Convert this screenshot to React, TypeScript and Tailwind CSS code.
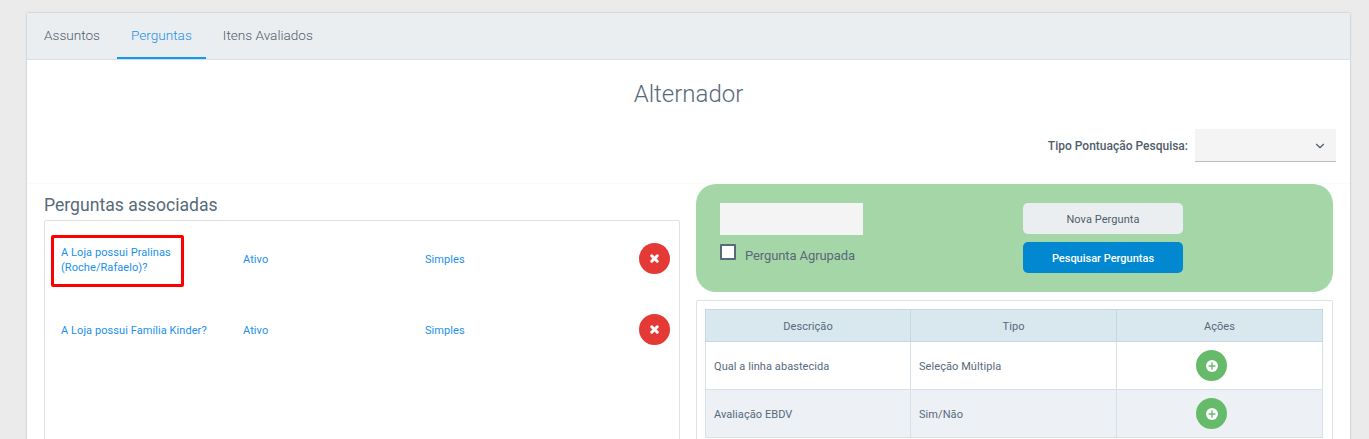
import { ChevronDown, Plus, X } from "lucide-react";

const associadas = [
  { descricao: "A Loja possui Pralinas (Roche/Rafaelo)?", marcada: true },
  { descricao: "A Loja possui Família Kinder?", marcada: false },
];

const perguntas = [
  { descricao: "Qual a linha abastecida", tipo: "Seleção Múltipla", bg: "bg-white" },
  { descricao: "Avaliação EBDV", tipo: "Sim/Não", bg: "bg-[#edf0f5]" },
];

export default function App() {
  return (
    <div className="h-[439px] overflow-hidden bg-[#ebebeb] pl-[27px] pt-[13px] font-['Roboto',sans-serif] text-[#57697a]">
      <div className="h-[500px] w-[1323px] bg-white shadow-[0_0_2px_rgba(0,0,0,0.25)]">
        <nav className="flex h-[47px] gap-[3px] border-b border-[#dcdfe2] bg-[#ebeef1] pl-[3px] text-[13.6px] font-light">
          <a className="flex h-[46px] items-center px-[14px] pb-[2px] text-[#4f5d6b]">Assuntos</a>
          <a className="flex h-[46px] items-center border-b-2 border-[#0d9bf2] px-[14px] text-[#2090ea]">Perguntas</a>
          <a className="flex h-[46px] items-center px-[14px] pb-[2px] text-[#4f5d6b]">Itens Avaliados</a>
        </nav>

        <h1 className="mt-[17px] text-center text-[24px] font-light leading-[34px] text-[#57697a]">Alternador</h1>

        <div className="mt-[18px] flex items-center justify-end pr-[14px]">
          <span className="mr-[7px] text-[12px] font-medium text-[#4f5d6b]">Tipo Pontuação Pesquisa:</span>
          <div className="flex h-[33px] w-[141px] items-center justify-end border-b border-[#b8bec4] bg-[#f4f4f4] pr-[9px]">
            <ChevronDown size={14} strokeWidth={2} className="mt-[1px] text-[#4f5d6b]" />
          </div>
        </div>

        <div className="mt-[21px] flex gap-[16px] border-t border-[#fafafa] pl-[17px]">
          <section className="w-[636px]">
            <h2 className="mt-[9px] text-[17.6px] leading-[24px] text-[#57697a]">Perguntas associadas</h2>
            <div className="mt-[3px] h-[300px] rounded-[2px] border border-[#dfe1e3] pl-[6px] pt-[3px]">
              {associadas.map((item) => (
                <div key={item.descricao} className="flex h-[71px] items-center text-[11px] leading-[15px] tracking-[0.07px] text-[#2090ea]">
                  <div className="relative flex h-[52px] w-[133px] items-center pl-[10px] pr-[6px]">
                    <span className={item.marcada ? "" : "whitespace-nowrap"}>{item.descricao}</span>
                    {item.marcada && (
                      <span className="absolute left-0 top-[1px] h-[52px] w-[133px] rounded-[2px] border-[3px] border-[#ff0000]" />
                    )}
                  </div>
                  <span className="ml-[59px] w-[182px]">Ativo</span>
                  <span className="w-[214px]">Simples</span>
                  <button className="mb-[2px] flex h-[31px] w-[31px] items-center justify-center rounded-full bg-[#e53935] text-white">
                    <X size={11} strokeWidth={6.5} />
                  </button>
                </div>
              ))}
            </div>
          </section>

          <section className="w-[637px]">
            <div className="flex h-[108px] rounded-[20px] bg-[#a5d6a7] pl-[24px] pt-[19px]">
              <div className="w-[303px]">
                <div className="h-[32px] w-[143px] bg-[#f4f4f4]" />
                <label className="mt-[9px] flex items-start text-[13px] tracking-[-0.1px] text-[#57697a]">
                  <span className="h-[16px] w-[16px] rounded-[1px] border-2 border-[#57697a] bg-white" />
                  <span className="ml-[9px] mt-[2px]">Pergunta Agrupada</span>
                </label>
              </div>
              <div className="flex w-[160px] flex-col gap-[8px]">
                <button className="h-[31px] rounded-[5px] bg-[#ebeef1] pt-[3px] text-[11px] tracking-[0.07px] text-[#4f5d6b]">Nova Pergunta</button>
                <button className="h-[31px] rounded-[5px] bg-[#0288d1] pt-[3px] text-[11px] font-medium text-white">Pesquisar Perguntas</button>
              </div>
            </div>

            <div className="mt-[8px] h-[200px] rounded-[2px] border border-[#dfe1e3] pl-[8px] pr-[9px] pt-[8px]">
              <table className="w-[618px] table-fixed border-collapse text-[11px] tracking-[0.07px]">
                <colgroup>
                  <col className="w-[205px]" />
                  <col className="w-[206px]" />
                  <col className="w-[206px]" />
                </colgroup>
                <thead>
                  <tr className="h-[32px] bg-[#d9e7ef] text-[#57697a]">
                    <th className="border border-[#c5d8e2] pt-[3px] font-normal">Descrição</th>
                    <th className="border border-[#c5d8e2] pt-[3px] font-normal">Tipo</th>
                    <th className="border border-[#c5d8e2] pt-[3px] font-normal">Ações</th>
                  </tr>
                </thead>
                <tbody>
                  {perguntas.map((p) => (
                    <tr key={p.descricao} className={`h-[48px] ${p.bg}`}>
                      <td className="border border-[#d5e0e7] pl-[8px] pt-[3px] text-[#57697a]">{p.descricao}</td>
                      <td className="border border-[#d5e0e7] pl-[8px] pt-[3px] text-[#57697a]">{p.tipo}</td>
                      <td className="border border-[#d5e0e7]">
                        <button className="ml-[79px] flex h-[31px] w-[31px] items-center justify-center rounded-full bg-[#66bb6a]">
                          <span className="flex h-[12px] w-[12px] items-center justify-center rounded-full bg-white text-[#66bb6a]">
                            <Plus size={10} strokeWidth={3.5} />
                          </span>
                        </button>
                      </td>
                    </tr>
                  ))}
                </tbody>
              </table>
            </div>
          </section>
        </div>
      </div>
    </div>
  );
}
